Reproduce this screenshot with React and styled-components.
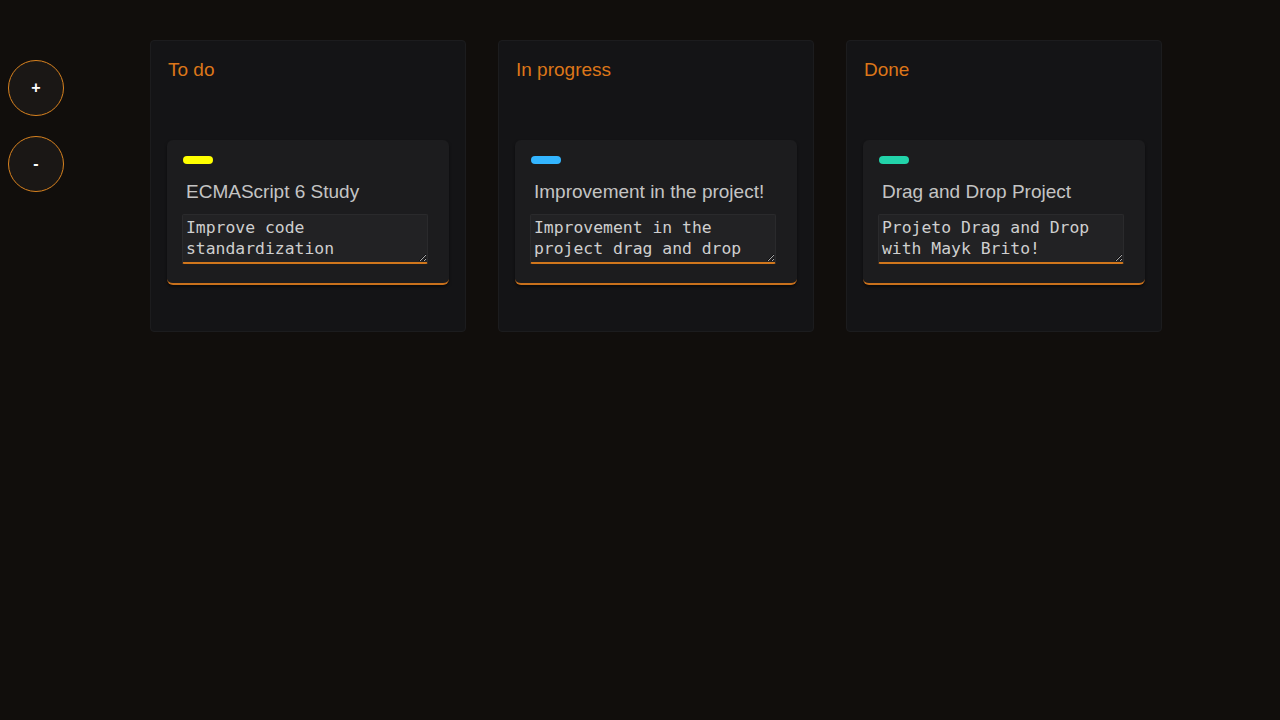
import React from 'react';
import styled, { createGlobalStyle } from 'styled-components';

const GlobalStyle = createGlobalStyle`
  html, body {
    margin: 0;
    padding: 0;
    background: #110e0c;
    font-family: 'Liberation Sans', Arial, sans-serif;
  }
`;

const columns = [
  {
    title: 'To do',
    cards: [{ color: '#ffff00', title: 'ECMAScript 6 Study', text: 'Improve code standardization' }],
  },
  {
    title: 'In progress',
    cards: [{ color: '#33b5ff', title: 'Improvement in the project!', text: 'Improvement in the project drag and drop' }],
  },
  {
    title: 'Done',
    cards: [{ color: '#22d3aa', title: 'Drag and Drop Project', text: 'Projeto Drag and Drop with Mayk Brito!' }],
  },
];

const App = () => {
  return (
    <Page>
      <GlobalStyle />
      <Controls>
        <RoundBtn>+</RoundBtn>
        <RoundBtn>-</RoundBtn>
      </Controls>
      <Board>
        {columns.map((col) => (
          <Column key={col.title}>
            <ColumnTitle>{col.title}</ColumnTitle>
            <CardList>
              {col.cards.map((card) => (
                <Card key={card.title}>
                  <Pill color={card.color} />
                  <CardTitle>{card.title}</CardTitle>
                  <Note defaultValue={card.text} rows={2} spellCheck={false} />
                </Card>
              ))}
            </CardList>
          </Column>
        ))}
      </Board>
    </Page>
  );
};

const Page = styled.div`
  display: flex;
  min-height: 720px;
  padding: 40px 0 0 8px;
  box-sizing: border-box;
`;

const Controls = styled.div`
  display: flex;
  flex-direction: column;
  gap: 20px;
  padding-top: 20px;
  width: 142px;
`;

const RoundBtn = styled.button`
  width: 56px;
  height: 56px;
  border-radius: 50%;
  border: 1px solid #d8821f;
  background: #1a1715;
  color: #ffffff;
  font-family: 'Liberation Sans', Arial, sans-serif;
  font-size: 16px;
  font-weight: 700;
  cursor: pointer;
`;

const Board = styled.div`
  display: flex;
  gap: 32px;
  align-items: flex-start;
`;

const Column = styled.section`
  width: 316px;
  height: 292px;
  box-sizing: border-box;
  background: #141416;
  border: 1px solid #1c1c1e;
  border-radius: 4px;
  padding: 17px 16px 0 16px;
`;

const ColumnTitle = styled.h2`
  margin: 0 0 0 1px;
  font-size: 19px;
  font-weight: 400;
  color: #dc7619;
  line-height: 23px;
`;

const CardList = styled.div`
  margin-top: 59px;
  display: flex;
  flex-direction: column;
  gap: 12px;
`;

const Card = styled.div`
  width: 282px;
  box-sizing: border-box;
  background: #1c1c1e;
  border-radius: 6px;
  border-bottom: 2px solid #c8701c;
  box-shadow: 0 2px 3px rgba(0, 0, 0, 0.5);
  padding: 16px 20px 19px 15px;
`;

const Pill = styled.div`
  width: 30px;
  height: 8px;
  border-radius: 4px;
  margin-left: 1px;
  background: ${(props) => props.color};
`;

const CardTitle = styled.h3`
  margin: 16px 0 10px 4px;
  font-size: 19px;
  font-weight: 400;
  line-height: 24px;
  color: #c4c4c4;
`;

const Note = styled.textarea`
  display: block;
  width: 246px;
  height: 50px;
  box-sizing: border-box;
  background: #222224;
  color: #cfcfcf;
  border: 1px solid #2a2a2c;
  border-bottom: 2px solid #d0761c;
  border-radius: 2px;
  padding: 2px 3px;
  font-family: 'DejaVu Sans Mono', monospace;
  font-size: 16.4px;
  line-height: 21px;
  resize: vertical;
  outline: none;
`;

export default App;
